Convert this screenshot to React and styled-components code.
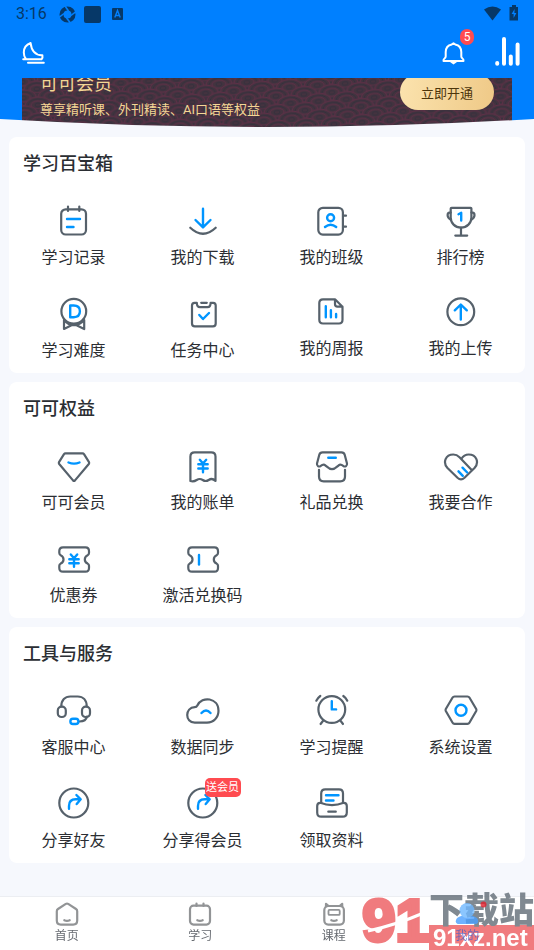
import React, {useState} from 'react'
import styled, {createGlobalStyle} from 'styled-components'

const GlobalStyle = createGlobalStyle`
    *{
        box-sizing:border-box;
    }
    body{
        margin:0;
        background:#f6f8fd;
        color:#2b2e33;
        font-family:Roboto, "Noto Sans CJK SC", sans-serif;
    }
    button{
        padding:0;
        border:none;
        background:none;
        color:inherit;
        font-family:inherit;
        cursor:pointer;
    }
    a{
        color:inherit;
        text-decoration:none;
    }
    svg{
        display:block;
    }
`

const Page = styled.div`
    min-height:100vh;
    display:flex;
    flex-direction:column;
`

const Hero = styled.header`
    position:relative;
    background:#0080ff;
`

const StatusBar = styled.div`
    height:28px;
    padding:0 15px 0 16px;
    display:flex;
    align-items:center;
    justify-content:space-between;
    color:#063868;
    font-size:16px;
    line-height:20px;
`

const StatusGroup = styled.div`
    display:flex;
    align-items:center;
    gap:${props => props.$gap};
`

const Toolbar = styled.div`
    height:50px;
    padding:0 14px 0 22px;
    display:flex;
    align-items:center;
    justify-content:space-between;
    color:#fff;
`

const ToolGroup = styled.div`
    display:flex;
    align-items:center;
    gap:30px;
`

const ToolButton = styled.button`
    position:relative;
`

const Count = styled.span`
    position:absolute;
    top:-13px;
    right:-9px;
    width:14px;
    height:16px;
    border-radius:8px;
    background:#ff4b50;
    font-size:12px;
    line-height:16px;
    text-align:center;
`

const Banner = styled.section`
    position:relative;
    height:50px;
    margin:0 22px;
    overflow:hidden;
    display:flex;
    justify-content:space-between;
    align-items:flex-end;
    padding:0 18px;
    background:#41323f;
    color:#f4d695;
`

const BannerPattern = styled.svg`
    position:absolute;
    inset:0;
    width:100%;
    height:100%;
`

const BannerText = styled.div`
    position:relative;
    padding-bottom:8px;
    h2{
        margin:0 0 4px;
        font-size:18px;
        font-weight:400;
        line-height:24px;
    }
    p{
        margin:0;
        font-size:13px;
        line-height:20px;
    }
`

const OpenButton = styled.button`
    && {
        position:relative;
        flex:none;
        width:94px;
        height:36px;
        margin-bottom:18px;
        border-radius:18px;
        background:linear-gradient(100deg, #fbe3ae, #efc987);
        color:#4d350b;
        font-size:13px;
    }
`

const Curve = styled.svg`
    position:absolute;
    left:0;
    bottom:0;
    width:100%;
    height:9px;
`

const Main = styled.main`
    padding:9px;
    display:flex;
    flex-direction:column;
    gap:9px;
`

const Card = styled.section`
    padding:14px 0 11px;
    border-radius:8px;
    background:#fff;
    h2{
        margin:0 14px 26px;
        font-size:18px;
        font-weight:500;
        line-height:26px;
    }
`

const Grid = styled.div`
    display:grid;
    grid-template-columns:repeat(4, 1fr);
    row-gap:27px;
    align-items:start;
`

const Item = styled.button`
    display:flex;
    flex-direction:column;
    align-items:center;
    gap:8px;
    font-size:16px;
    line-height:22px;
`

const IconBox = styled.span`
    position:relative;
`

const Icon = styled.svg`
    fill:none;
    stroke:#56616b;
    stroke-width:2.2;
    stroke-linecap:round;
    stroke-linejoin:round;
    .blue{
        stroke:#0095ff;
        stroke-width:2.4;
    }
`

const Tag = styled.span`
    position:absolute;
    left:20px;
    top:-8px;
    width:36px;
    height:19px;
    border-radius:5px;
    background:#ff4b50;
    color:#fff;
    font-size:11px;
    line-height:19px;
    white-space:nowrap;
`

const TabBar = styled.nav`
    position:sticky;
    bottom:0;
    margin-top:auto;
    display:grid;
    grid-template-columns:repeat(4, 1fr);
    border-top:1px solid #eceef2;
    background:#fff;
`

const Tab = styled.a`
    position:relative;
    z-index:1;
    padding:5px 0 6px;
    display:flex;
    flex-direction:column;
    align-items:center;
    gap:2px;
    color:${props => props.$active ? '#5260c4' : '#666a70'};
    font-size:12px;
    line-height:16px;
    opacity:${props => props.$active ? .8 : 1};
`

const TabIcon = styled.svg`
    fill:none;
    stroke:#929496;
    stroke-width:2.2;
    stroke-linecap:round;
    stroke-linejoin:round;
`

const SiteMark = styled.div`
    position:absolute;
    right:0;
    bottom:0;
    display:flex;
    align-items:flex-end;
    opacity:.85;
`

const MarkNumber = styled.div`
    position:relative;
    color:#ee6468;
    font-family:"Liberation Sans", sans-serif;
    font-size:60px;
    font-weight:700;
    line-height:58px;
    -webkit-text-stroke:4px #ee6468;
    svg{
        position:absolute;
        left:0;
        top:0;
    }
`

const MarkName = styled.div`
    color:#6a757e;
    font-family:"Noto Sans CJK SC", sans-serif;
    font-size:35px;
    font-weight:900;
    line-height:34px;
`

const MarkSite = styled.div`
    padding:0 4px;
    background:#ee6468;
    color:#fff;
    font-family:"Liberation Sans", sans-serif;
    font-size:24px;
    font-weight:700;
    line-height:25px;
`

const ticket = 'M7 6.3H29.5Q33 6.3 33 10V12Q33 13.4 31.6 14.2Q28.8 15.6 28.8 18.4T31.6 22.6Q33 23.4 33 24.8V27Q33 30.7 29.5 30.7H7Q3.3 30.7 3.3 27V24.8Q3.3 23.4 4.7 22.6Q7.5 21.2 7.5 18.4T4.7 14.2Q3.3 13.4 3.3 12V10Q3.3 6.3 7 6.3Z'

const icons = {
    record: (
        <>
            <rect x="5.2" y="6.3" width="24.8" height="25.2" rx="4.5"/>
            <path d="M12 3.5V8M23.3 3.5V8"/>
            <path className="blue" d="M11 16H24M11 24H17.5"/>
        </>
    ),
    download: (
        <>
            <path d="M5.3 24.7Q18 36.8 30.7 24.7"/>
            <path className="blue" d="M18 5.8V24M10.5 17L18 24.4L25.5 17"/>
        </>
    ),
    group: (
        <>
            <rect x="4.3" y="4.8" width="24.6" height="26.8" rx="4.5"/>
            <path d="M29.5 12.7H32M29.5 23.7H32"/>
            <circle className="blue" cx="16.6" cy="14.7" r="3.5"/>
            <path className="blue" d="M11 24Q16.6 19.4 22.2 24"/>
        </>
    ),
    rank: (
        <>
            <path d="M8.6 4.8H27.6Q28.4 4.8 28.4 5.6V14.5C28.4 20 24 24.6 18 24.6S7.7 20 7.7 14.5V5.6Q7.7 4.8 8.6 4.8Z"/>
            <path d="M7.7 9.6H6.5Q4.6 9.6 4.6 12.2T7.9 16.8M28.4 9.6H29.6Q31.5 9.6 31.5 12.2T28.2 16.8M18 24.6V32.6M12.3 32.6H24.2"/>
            <path className="blue" d="M15.5 11.2L18.2 9.8V17.6"/>
        </>
    ),
    level: (
        <>
            <circle cx="17.8" cy="15.3" r="12.4"/>
            <path d="M8 24V33L18 28L28.2 33V24M8 24Q13 30 20 29M28.2 24Q24 29 18 29"/>
            <path className="blue" d="M14.2 9.5H17.7Q23.9 9.5 23.9 15.3T17.7 21.2H14.2Z"/>
        </>
    ),
    task: (
        <>
            <path d="M11.8 6.8H9.5Q7 6.8 7 9.5V27.5Q7 30.3 9.8 30.3H28Q30.7 30.3 30.7 27.5V9.5Q30.7 6.8 28.2 6.8H25.6Q25.6 11.2 22.5 11.2H15Q11.8 11.2 11.8 6.8M16.2 6.8H21.8"/>
            <path className="blue" d="M14.3 19L18 23L24 17"/>
        </>
    ),
    report: (
        <>
            <path d="M21 3.3H9Q5.3 3.3 5.3 7V23.8Q5.3 27.5 9 27.5H25Q28.5 27.5 28.5 23.8V10.7ZM21 3.3V8Q21 10.7 23.5 10.7H28.5"/>
            <path className="blue" d="M11.8 10.3V21.3M16.9 14.3V21.3M22.1 18V21.3"/>
        </>
    ),
    upload: (
        <>
            <circle cx="17.8" cy="15.7" r="13.4"/>
            <path className="blue" d="M17.8 9V23.5M11.8 14.3L17.8 8.5L23.8 14.3"/>
        </>
    ),
    vip: (
        <>
            <path d="M9.5 5.3H26.5Q27.5 5.3 28 6.2L33 14.2Q33.5 15 32.8 16L19 32.4Q18 33.4 17 32.4L3.2 16Q2.5 15 3 14.2L8 6.2Q8.5 5.3 9.5 5.3Z"/>
            <path className="blue" d="M12.5 14.5Q18 16.7 23.5 14.5"/>
        </>
    ),
    bill: (
        <>
            <path d="M5.4 33V8.5Q5.4 4.3 9.7 4.3H26.2Q30.5 4.3 30.5 8.5V33Q27.2 29.6 23.7 32Q20.7 34 17.7 32T11.7 32T5.4 33Z"/>
            <path className="blue" d="M14.8 11.8L18 15.5L21.2 11.8M13.3 16.3H22.7M13.3 20.5H22.7M18 16V24.3"/>
        </>
    ),
    gift: (
        <>
            <path d="M8.5 4.3H27.5Q30 4.3 30.7 6.7L33 15.5C33.3 18 31.3 19 29.6 18.2C27.8 16.8 26.3 16 24.7 17.3C22.3 19.3 20.8 21.2 18 21.2S13.7 19.3 11.3 17.3C9.7 16 8.2 16.8 6.4 18.2C4.7 19 2.7 18 3 15.5L5.3 6.7Q6 4.3 8.5 4.3Z"/>
            <path d="M5 21.8V28.5Q5 33.3 9.7 33.3H26.3Q31 33.3 31 28.5V21.8"/>
            <path className="blue" d="M14.3 9.7H21.8"/>
        </>
    ),
    heart: (
        <>
            <path d="M28.7 22L16.5 9.2Q13.8 6.5 10.3 6.5C2.5 6.5 -.5 14.5 4.5 20L14.5 29.8Q18 33 21.5 29.8L31.5 20C36.5 14.5 33.5 6.5 25.7 6.5Q21 6.5 18.3 11"/>
            <path className="blue" d="M15.5 23.3L19.8 27.8M19.5 19.7L24.2 24.5"/>
        </>
    ),
    coupon: (
        <>
            <path d={ticket}/>
            <path className="blue" d="M14.8 13.5L18 17.2L21.2 13.5M13.3 18.2H22.7M13.3 22.2H22.7M18 18V25.8"/>
        </>
    ),
    code: (
        <>
            <path d={ticket}/>
            <path className="blue" d="M14 14V23.5"/>
        </>
    ),
    service: (
        <>
            <path d="M5.3 13.5C5.3 7 9 3.5 14.3 3.5H21.7C27 3.5 30.7 7 30.7 13.5M31 23.5Q30 28.5 23.5 28.5"/>
            <rect x="1.8" y="13.7" width="8" height="10.3" rx="3.8"/>
            <rect x="26" y="13.7" width="8" height="10.3" rx="3.8"/>
            <rect className="blue" x="14.4" y="25.7" width="8" height="5.3" rx="2.6"/>
        </>
    ),
    cloud: (
        <>
            <path d="M9.8 29.6C-.3 29.6 -.3 14.2 9.8 14.2Q11.6 14.2 12.2 12.7C17 2.5 33.5 4.7 33.5 17.8C33.5 24.5 28.5 29.6 22 29.6Z"/>
            <path className="blue" d="M16.5 20Q21 15 25.5 20"/>
        </>
    ),
    alarm: (
        <>
            <circle cx="17.8" cy="16.5" r="13.4"/>
            <path d="M2.3 7.7Q4 4.7 6.3 3M33.3 7.7Q31.8 4.7 29.3 3M9.1 27.8L6.6 31M26.5 27.8L29 31"/>
            <path className="blue" d="M17.8 8.3V16.4H22.1"/>
        </>
    ),
    settings: (
        <>
            <path d="M11.5 3.5H24.5Q25.8 3.5 26.4 4.5L33.2 16Q33.7 17 33.2 18L26.4 29.8Q25.8 30.8 24.5 30.8H11.5Q10.2 30.8 9.6 29.8L2.8 18Q2.3 17 2.8 16L9.6 4.5Q10.2 3.5 11.5 3.5Z"/>
            <circle className="blue" cx="18" cy="17.2" r="5.5"/>
        </>
    ),
    share: (
        <>
            <circle cx="17.8" cy="17" r="14.5"/>
            <path className="blue" d="M13 22.7V20Q13 13.3 19.7 13.3H24.5M20.4 9L24.7 13.3L20.7 18"/>
        </>
    ),
    files: (
        <>
            <path d="M7.2 17V7.5Q7.2 3.3 11.3 3.3H25Q29 3.3 29 7.5V17"/>
            <path d="M6.3 16.8Q18 21.5 29.7 16.8Q32.8 16.8 32.8 20V26.5Q32.8 30.7 28.7 30.7H7.3Q3.2 30.7 3.2 26.5V20Q3.2 16.8 6.3 16.8ZM14.3 25.7H21.8"/>
            <path className="blue" d="M12 9.3H24.5M12 14.5H19.5"/>
        </>
    ),
}

const sections = [
    {
        title: '学习百宝箱',
        items: [
            {icon: 'record', label: '学习记录'},
            {icon: 'download', label: '我的下载'},
            {icon: 'group', label: '我的班级'},
            {icon: 'rank', label: '排行榜'},
            {icon: 'level', label: '学习难度'},
            {icon: 'task', label: '任务中心'},
            {icon: 'report', label: '我的周报', height: 34},
            {icon: 'upload', label: '我的上传', height: 34},
        ],
    },
    {
        title: '可可权益',
        items: [
            {icon: 'vip', label: '可可会员'},
            {icon: 'bill', label: '我的账单'},
            {icon: 'gift', label: '礼品兑换'},
            {icon: 'heart', label: '我要合作'},
            {icon: 'coupon', label: '优惠券'},
            {icon: 'code', label: '激活兑换码'},
        ],
    },
    {
        title: '工具与服务',
        items: [
            {icon: 'service', label: '客服中心'},
            {icon: 'cloud', label: '数据同步'},
            {icon: 'alarm', label: '学习提醒'},
            {icon: 'settings', label: '系统设置'},
            {icon: 'share', label: '分享好友'},
            {icon: 'share', label: '分享得会员', tag: '送会员'},
            {icon: 'files', label: '领取资料'},
        ],
    },
]

const tabs = [
    {
        id: 'home',
        label: '首页',
        icon: <path d="M10.8 1.9Q12 1.2 13.2 1.9L21 7Q22.2 7.8 22.2 9.3V18.5Q22.2 22.6 18.2 22.6H5.8Q1.8 22.6 1.8 18.5V9.3Q1.8 7.8 3 7ZM9.3 18.2Q12 19.6 14.7 18.2"/>,
    },
    {
        id: 'study',
        label: '学习',
        icon: (
            <>
                <rect x="2" y="3.7" width="20" height="18.9" rx="3.5"/>
                <path d="M8.5 1.5V4M15.5 1.5V4M9.3 18.2Q12 19.6 14.7 18.2"/>
            </>
        ),
    },
    {
        id: 'course',
        label: '课程',
        icon: (
            <>
                <rect x="2.3" y="4" width="19.6" height="18.6" rx="4"/>
                <path d="M4 4.5V1.8L6.3 3.8M20.2 4.5V1.8L17.9 3.8M9.3 18.2Q12 19.6 14.7 18.2"/>
                <rect x="6.5" y="7.9" width="11.2" height="5" rx="1" strokeWidth="1.8"/>
            </>
        ),
    },
    {
        id: 'mine',
        label: '我的',
        icon: (
            <>
                <path fill="#4aa0ff" stroke="none" d="M12 13.5C5 13.5 .8 15.5 .8 19.2Q.8 22 4 22H20Q23.2 22 23.2 19.2C23.2 15.5 19 13.5 12 13.5Z"/>
                <circle fill="#6fb8ff" stroke="none" cx="12" cy="8.5" r="7.5"/>
                <circle fill="#e2202c" stroke="none" cx="28.5" cy="2.5" r="3"/>
            </>
        ),
    },
]

const Swirls = () => (
    <BannerPattern aria-hidden="true">
        <defs>
            <pattern id="swirls" width="28" height="16" patternUnits="userSpaceOnUse" patternTransform="rotate(-4)">
                <g fill="#44333f" stroke="#5e2f47" strokeWidth="1">
                    {[[0, 4], [28, 4], [14, 12], [0, 20], [28, 20]].map(([x, y]) => (
                        <g key={`${x}-${y}`}>
                            <ellipse cx={x} cy={y} rx="13" ry="8"/>
                            <ellipse cx={x} cy={y} rx="10" ry="6" stroke="#33303d"/>
                            <ellipse cx={x} cy={y} rx="7" ry="4"/>
                            <ellipse cx={x} cy={y} rx="3" ry="2" stroke="#33303d"/>
                        </g>
                    ))}
                </g>
            </pattern>
        </defs>
        <rect width="100%" height="100%" fill="url(#swirls)"/>
    </BannerPattern>
)

const Header = () => (
    <Hero>
        <StatusBar>
            <StatusGroup $gap="12px">
                <span>3:16</span>
                <StatusGroup $gap="8px">
                    <svg width="17" height="17" viewBox="0 0 17 17">
                        <circle cx="8.5" cy="8.5" r="6" fill="none" stroke="currentColor" strokeWidth="4"/>
                        <path d="M6 0L9.5 5M17 5.5L12 9.5M11.5 17L7.5 12M0 11.5L5 7.5" stroke="#0080ff" strokeWidth="1.6"/>
                    </svg>
                    <svg width="17" height="17" viewBox="0 0 17 17">
                        <rect width="17" height="17" rx="2" fill="currentColor"/>
                    </svg>
                    <svg width="17" height="17" viewBox="0 0 17 17">
                        <rect x="3" y="2" width="11" height="12" rx="1" fill="currentColor"/>
                        <path d="M5.8 11.5L8.5 4.5L11.2 11.5M6.8 9.5H10.2" fill="none" stroke="#0080ff" strokeWidth="1.4"/>
                    </svg>
                </StatusGroup>
            </StatusGroup>
            <StatusGroup $gap="8px">
                <svg width="17" height="16" viewBox="0 0 17 16">
                    <path d="M0 3.5Q8.5 -2.5 17 3.5L8.5 14.5Z" fill="currentColor"/>
                </svg>
                <svg width="10" height="18" viewBox="0 0 10 18">
                    <path d="M3 0H7V2H9V15.5H0.5V2H3Z" fill="currentColor"/>
                    <path d="M5.6 4L2.6 9H4.6V13L7.4 8H5.4Z" fill="#0080ff"/>
                </svg>
            </StatusGroup>
        </StatusBar>
        <Toolbar>
            <ToolButton aria-label="夜间模式">
                <svg width="23" height="25" viewBox="0 0 23 25" fill="none" stroke="currentColor" strokeWidth="2" strokeLinecap="round" strokeLinejoin="round">
                    <path d="M1.2 18.3H19.5Q21 16.5 20.4 14.2Q10 14.5 8.6 2Q1.8 4.5 1.8 11.5Q1.8 15.5 3.9 18M6 21.8H21.8"/>
                </svg>
            </ToolButton>
            <ToolGroup>
                <ToolButton aria-label="消息">
                    <svg width="23" height="23" viewBox="0 0 23 23" fill="none" stroke="currentColor" strokeWidth="2" strokeLinejoin="round">
                        <path d="M11.5 1.3L13.2 2.4C17.5 3.3 19.3 6.2 19.3 10V14.5Q19.3 15.7 20.5 16.5T21.5 19H1.5Q1.3 17.3 2.5 16.5T3.7 14.5V10C3.7 6.2 5.5 3.3 9.8 2.4Z"/>
                        <path d="M8 20H15L11.5 22.5Z" fill="currentColor" stroke="none"/>
                    </svg>
                    <Count>5</Count>
                </ToolButton>
                <ToolButton aria-label="学习统计">
                    <svg width="25" height="33" viewBox="0 0 25 33" stroke="currentColor" strokeWidth="4" strokeLinecap="round">
                        <path d="M2.2 26V26.8M9 2V26.8M15.8 19.5V26.8M22.6 7.5V26.8"/>
                    </svg>
                </ToolButton>
            </ToolGroup>
        </Toolbar>
        <Banner>
            <Swirls/>
            <BannerText>
                <h2>可可会员</h2>
                <p>尊享精听课、外刊精读、AI口语等权益</p>
            </BannerText>
            <OpenButton>立即开通</OpenButton>
        </Banner>
        <Curve viewBox="0 0 534 9" preserveAspectRatio="none" aria-hidden="true">
            <path d="M0 0Q267 16 534 0V9H0Z" fill="#f6f8fd"/>
        </Curve>
    </Hero>
)

const App = () => {
    const [active, setActive] = useState('mine')
    return (
        <Page>
            <GlobalStyle/>
            <Header/>
            <Main>
                {sections.map(({title, items}) => (
                    <Card key={title}>
                        <h2>{title}</h2>
                        <Grid>
                            {items.map(({icon, label, tag, height = 36}) => (
                                <Item key={label}>
                                    <IconBox>
                                        <Icon width="36" height={height} viewBox={`0 0 36 ${height}`}>
                                            {icons[icon]}
                                        </Icon>
                                        {tag && <Tag>{tag}</Tag>}
                                    </IconBox>
                                    <span>{label}</span>
                                </Item>
                            ))}
                        </Grid>
                    </Card>
                ))}
            </Main>
            <TabBar>
                {tabs.map(({id, label, icon}) => (
                    <Tab key={id} href={`#${id}`} $active={id === active} onClick={() => setActive(id)}>
                        <TabIcon width="24" height="24" viewBox="0 0 24 24" overflow="visible">{icon}</TabIcon>
                        <span>{label}</span>
                    </Tab>
                ))}
                <SiteMark>
                    <MarkNumber>
                        91
                        <svg width="64" height="58" viewBox="0 0 64 58" aria-hidden="true">
                            <path d="M6 39Q34 33 64 20" fill="none" stroke="#fff" strokeWidth="3"/>
                        </svg>
                    </MarkNumber>
                    <div>
                        <MarkName>下载站</MarkName>
                        <MarkSite>91xz.net</MarkSite>
                    </div>
                </SiteMark>
            </TabBar>
        </Page>
    )
}

export default App
